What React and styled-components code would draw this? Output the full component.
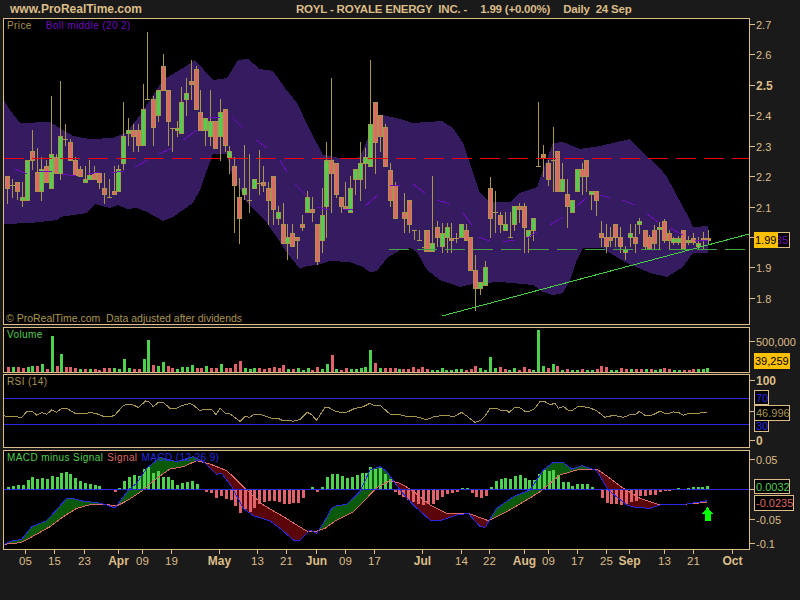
import React from 'react'
import styled, { createGlobalStyle } from 'styled-components'

const TAN = '#dcbd88'
const OLIVE = '#a8964f'
const GREEN = '#50cf50'
const RED = '#dd6a64'
const BLUE = '#2a2ae0'
const PURPLE = '#6f0cbc'

// candles: x, high, low, body top, body bottom, colour (d = doji, top is the tick)
const candles = [
  [7,176,204,176,189,'r'],[12,179,198,185,185,'d'],[17,182,200,182,192,'r'],[22,182,207,197,201,'g'],[27,160,201,160,201,'g'],
  [32,130,170,151,161,'r'],[37,148,192,172,192,'r'],[41,157,201,169,192,'g'],[46,160,183,166,183,'r'],[51,96,189,154,189,'g'],
  [56,154,174,157,174,'r'],[60,81,180,136,174,'g'],[65,124,146,139,139,'d'],[70,139,161,142,161,'r'],[75,157,176,160,176,'r'],
  [80,166,177,169,177,'r'],[85,166,183,179,183,'g'],[89,160,180,175,180,'g'],[94,166,180,173,180,'r'],[99,173,189,173,183,'r'],
  [104,173,204,188,195,'r'],[109,179,197,197,197,'d'],[114,166,195,191,195,'r'],[118,165,192,169,192,'g'],[123,102,170,136,164,'g'],
  [128,118,146,130,134,'g'],[133,124,152,130,137,'r'],[138,124,152,130,146,'r'],[143,84,146,109,146,'g'],[147,32,99,99,99,'d'],
  [153,96,146,99,128,'r'],[158,90,122,90,116,'g'],[163,54,91,66,91,'r'],[168,90,146,90,122,'r'],[172,128,152,128,128,'d'],
  [177,121,137,128,131,'g'],[181,87,134,102,134,'g'],[186,78,116,93,100,'g'],[191,60,100,81,85,'r'],[196,66,110,69,110,'r'],
  [200,90,131,112,131,'r'],[205,118,146,118,131,'g'],[210,90,146,121,137,'g'],[215,121,149,121,149,'r'],[220,99,161,112,137,'g'],
  [225,109,152,109,146,'r'],[229,146,174,151,158,'g'],[234,157,233,166,186,'r'],[239,178,244,197,219,'r'],[244,145,200,188,195,'g'],
  [249,154,213,200,200,'d'],[254,179,189,179,189,'g'],[259,150,195,183,183,'d'],[263,166,192,182,186,'r'],[268,182,225,188,201,'r'],
  [273,176,225,176,210,'r'],[278,206,225,212,219,'g'],[283,203,244,224,244,'r'],[287,224,260,237,244,'g'],[292,224,247,233,247,'r'],
  [297,237,259,237,241,'r'],[302,215,231,224,228,'r'],[307,191,213,197,213,'g'],[312,197,222,209,213,'r'],[317,224,265,224,262,'r'],
  [322,188,253,215,241,'g'],[326,142,238,160,207,'g'],[331,78,213,160,174,'r'],[336,163,198,163,195,'r'],[341,197,213,197,207,'r'],
  [345,182,209,206,209,'r'],[350,176,213,188,213,'g'],[355,169,195,169,180,'g'],[360,142,201,163,180,'g'],[365,148,189,157,164,'g'],
  [370,60,167,124,167,'g'],[375,102,174,102,143,'r'],[380,115,152,115,137,'r'],[385,124,167,127,167,'r'],[390,163,207,170,201,'r'],
  [395,182,219,185,219,'r'],[404,193,233,212,219,'r'],[409,200,233,200,225,'r'],[414,230,240,230,230,'d'],[419,230,240,240,240,'d'],
  [424,230,252,247,247,'d'],[427,230,252,230,252,'r'],[432,176,252,243,252,'g'],[437,221,247,227,238,'r'],[442,223,253,233,247,'g'],
  [447,223,253,227,238,'g'],[451,223,253,238,241,'r'],[456,233,243,238,238,'d'],[461,224,238,224,238,'g'],[466,224,241,230,241,'r'],
  [470,237,271,237,271,'r'],[475,255,311,270,289,'r'],[480,282,295,282,289,'g'],[485,261,286,267,286,'g'],[490,177,238,188,219,'r'],
  [495,191,233,212,212,'d'],[500,212,233,215,225,'r'],[505,212,231,224,231,'g'],[510,212,237,237,237,'d'],[514,206,231,206,225,'g'],
  [519,203,223,206,210,'r'],[524,203,253,206,228,'r'],[528,230,253,230,237,'g'],[533,218,241,218,231,'g'],[538,102,166,166,166,'d'],
  [543,145,177,154,158,'r'],[548,160,186,163,180,'r'],[553,127,192,160,160,'d'],[557,151,192,151,192,'r'],[562,163,192,179,192,'g'],
  [567,179,228,194,207,'r'],[572,200,213,200,213,'g'],[577,169,192,169,192,'g'],[582,163,195,169,177,'r'],[586,160,192,160,177,'r'],
  [591,191,210,191,195,'g'],[596,191,216,191,201,'r'],[601,221,247,233,238,'r'],[606,224,253,237,247,'r'],[610,227,247,237,241,'r'],
  [615,224,247,224,238,'r'],[620,227,253,237,247,'r'],[625,246,260,249,253,'g'],[630,224,247,233,238,'g'],[635,224,253,237,244,'r'],
  [639,218,234,221,225,'g'],[645,230,250,230,247,'r'],[649,235,250,237,249,'r'],[654,225,250,230,244,'r'],[659,222,250,227,230,'g'],
  [664,219,243,221,241,'r'],[669,230,250,233,241,'r'],[673,237,245,238,243,'g'],[678,236,245,238,243,'g'],[683,230,250,230,249,'r'],
  [688,236,245,240,243,'g'],[693,233,245,238,243,'r'],[698,237,249,243,247,'g'],[703,232,250,238,241,'r'],[708,230,245,238,241,'r'],
]

const bandTop = [[4,100],[10,110],[20,123],[50,122],[60,128],[73,136],[90,139],[113,138],[127,132],[140,115],[150,100],[163,80],[183,68],[195,60],[213,80],[227,78],[238,60],[248,59],[260,69],[273,71],[285,88],[297,103],[310,130],[323,155],[333,157],[347,159],[360,157],[370,133],[383,115],[400,119],[413,123],[442,121],[453,128],[463,143],[470,163],[472,170],[480,193],[490,202],[510,202],[520,193],[537,187],[543,170],[553,143],[563,142],[580,149],[600,146],[630,139],[640,150],[660,168],[667,177],[690,220],[693,227],[708,226]]
const bandBottom = [[4,224],[30,223],[57,220],[60,217],[87,213],[95,204],[110,208],[118,205],[127,209],[137,208],[147,212],[163,221],[173,217],[193,203],[200,190],[207,170],[213,154],[227,154],[230,170],[247,203],[267,223],[280,242],[287,253],[300,269],[307,266],[317,265],[330,261],[350,262],[363,267],[370,272],[377,271],[387,258],[400,250],[410,248],[417,252],[427,270],[440,280],[460,287],[473,284],[483,283],[500,282],[533,285],[543,292],[553,295],[563,293],[570,280],[577,260],[583,248],[603,248],[613,255],[627,263],[650,273],[667,277],[683,267],[693,253],[708,253]]
const bandPoints = [...bandTop, ...[...bandBottom].reverse()].join(' ')

const middleDashes = [
  [[15,169],[27,174]],[[39,171],[52,171]],[[62,174],[76,176]],[[88,174],[100,172]],[[111,173],[124,171]],
  [[135,167],[148,160]],[[159,154],[172,148]],[[183,140],[197,130]],[[208,118],[220,117]],[[232,117],[243,128]],
  [[256,140],[267,148]],[[280,160],[287,172]],[[295,184],[307,196]],[[317,207],[329,210]],[[343,209],[353,210]],
  [[365,206],[378,195]],[[390,186],[400,185]],[[413,184],[425,193]],[[437,200],[450,204]],[[462,212],[472,225]],
  [[478,237],[490,241]],[[502,242],[515,240]],[[527,238],[537,232]],[[550,225],[563,217]],[[575,208],[587,197]],
  [[600,195],[610,198]],[[622,200],[635,205]],[[647,214],[658,222]],[[670,228],[683,235]],[[695,240],[708,241]],
]

// measured on a 3x grid, so x and y are thirds of a pixel from the origin given
const grid = (x0, y0, list) => list.map(([x, y]) => [x0 + x / 3, y0 + y / 3])
const line = pts => pts.map(p => p.join(',')).join(' ')

const volume = [
  [[23,'r',141],[38,'g',141],[53,'r',141],[68,'r',144],[83,'g',141],[97,'g',138],[110,'r',138],[125,'g',132],[140,'r',147],[155,'g',48],[170,'r',138],[182,'g',102],[197,'r',141],[211,'r',141],[226,'r',144],[241,'g',147],[256,'r',147],[269,'g',147],[284,'r',147],[298,'r',150],[313,'r',144],[328,'r',144],[343,'g',144],[356,'g',147],[371,'g',117],[386,'g',144],[401,'r',147],[416,'r',147],[431,'g',117],[443,'g',60],[458,'r',135],[473,'g',138],[488,'g',126],[503,'r',138],[515,'r',144],[530,'g',147],[545,'g',141],[560,'g',141],[575,'g',135],[590,'r',144],[602,'r',144],[617,'g',138],[632,'r',144],[647,'r',144],[662,'g',132],[677,'r',144],[689,'r',144],[704,'r',132],[719,'r',123],[734,'g',144],[749,'g',147],[761,'g',144],[776,'r',144],[791,'r',147],[806,'r',144],[821,'r',141],[836,'r',144],[848,'r',135],[863,'g',147],[878,'r',147],[893,'g',144],[908,'g',150],[923,'g',144],[935,'r',150],[950,'r',141],[965,'g',147],[980,'g',132],[995,'r',105],[1007,'g',147],[1022,'r',150],[1037,'r',144],[1052,'g',147],[1067,'g',147],[1082,'g',144],[1094,'g',141],[1109,'g',90],[1124,'r',129],[1139,'g',144],[1154,'r',144],[1169,'r',144],[1184,'r',144],[1196,'g',147]],
  [[10,'r',147],[25,'r',147],[40,'r',141],[55,'r',147],[67,'r',141],[82,'r',147],[97,'g',150],[112,'g',150],[127,'g',144],[139,'g',150],[154,'g',150],[169,'g',147],[184,'g',147],[199,'r',150],[214,'r',147],[226,'r',138],[241,'g',144],[256,'g',150],[271,'g',111],[286,'g',144],[301,'r',141],[316,'r',147],[328,'g',150],[343,'g',144],[358,'r',150],[373,'r',141],[388,'r',147],[400,'g',150],[415,'g',30],[430,'g',138],[445,'r',144],[460,'g',132],[472,'r',138],[487,'g',150],[502,'r',147],[517,'g',150],[532,'g',150],[547,'r',147],[562,'g',150],[577,'g',150],[592,'r',147],[604,'r',138],[619,'r',141],[634,'g',150],[649,'g',150],[664,'r',144],[679,'r',147],[694,'g',147],[709,'r',147],[724,'r',147],[739,'g',147],[754,'r',147],[766,'g',150],[781,'g',147],[793,'r',144],[808,'r',147],[823,'g',150],[838,'g',150],[853,'r',150],[868,'r',150],[880,'r',147],[895,'g',147],[910,'g',147],[922,'g',144]],
]
const volumeBars = [
  ...volume[0].map(([x, c, y]) => ({ x: Math.round(x / 3), c, y: Math.round(320 + y / 3) })),
  ...volume[1].map(([x, c, y]) => ({ x: Math.round(400 + x / 3), c, y: Math.round(320 + y / 3) })),
]

const rsi = [
  ...grid(0, 320, [[12,287],[20,289],[45,289],[65,293],[80,275],[95,273],[110,285],[125,278],[140,283],[155,270],[170,277],[185,265],[200,265],[225,280],[260,280],[270,277],[290,281],[310,289],[335,289],[345,285],[370,256],[385,253],[400,255],[415,262],[437,243],[445,244],[460,260],[475,247],[490,247],[510,265],[530,265],[545,257],[570,250],[580,255],[600,272],[615,267],[635,268],[648,284],[660,265],[677,280],[690,282],[720,304],[735,289],[748,292],[762,283],[780,283],[800,290],[815,295],[835,295],[850,303],[865,301],[880,304],[900,298],[922,277],[935,284],[950,301],[975,262],[985,262],[1005,273],[1020,277],[1040,277],[1065,265],[1085,262],[1110,250],[1120,256],[1140,256],[1170,282],[1185,285]]),
  ...grid(400, 320, [[0,284],[20,289],[45,289],[80,299],[100,291],[130,286],[150,288],[165,288],[185,277],[200,288],[225,307],[240,302],[255,288],[270,265],[290,265],[300,270],[320,271],[327,277],[345,262],[358,262],[375,274],[390,273],[405,265],[420,245],[432,243],[450,254],[465,250],[475,265],[490,259],[505,271],[517,271],[535,259],[565,262],[590,272],[615,292],[640,286],[670,292],[690,284],[705,285],[718,274],[735,286],[755,286],[780,274],[800,282],[820,276],[835,277],[850,286],[865,281],[895,281],[905,277],[922,277]]),
]

const signal = [
  ...grid(0, 445, [[12,298],[60,293],[75,287],[150,245],[190,215],[230,190],[275,178],[315,178],[350,183],[385,165],[430,135],[470,100],[510,72],[550,65],[590,47],[630,57],[680,77],[705,100],[740,135],[790,180],[850,215],[890,240],[920,258],[945,260],[975,250],[1010,225],[1060,200],[1090,170],[1130,128],[1170,107]]),
  ...grid(400, 445, [[0,115],[35,135],[90,180],[140,205],[205,205],[265,227],[320,200],[380,165],[420,140],[480,90],[540,72],[590,72],[630,100],[670,130],[720,160],[770,177],[860,177],[922,172]]),
]
const macd = [
  ...grid(0, 445, [[12,298],[35,288],[65,283],[95,245],[140,227],[160,205],[200,160],[225,162],[255,170],[290,172],[320,180],[345,189],[385,135],[410,115],[440,70],[480,37],[530,50],[580,35],[610,50],[650,88],[665,85],[695,125],[730,190],[760,212],[810,228],[840,250],[880,285],[900,285],[930,255],[950,265],[970,235],[995,190],[1010,182],[1040,178],[1080,140],[1110,75],[1140,65],[1160,80]]),
  ...grid(400, 445, [[0,135],[40,180],[90,225],[120,227],[170,210],[205,205],[240,245],[255,247],[290,190],[340,155],[390,135],[430,75],[460,52],[490,53],[515,72],[545,62],[590,77],[625,135],[680,180],[705,187],[750,190],[780,180],[860,177],[900,171],[922,167]]),
]

const histogram = [
  ...[[23,127],[38,123],[53,120],[68,120],[83,105],[97,96],[110,102],[125,100],[140,102],[155,93],[170,96],[182,84],[197,81],[211,87],[226,99],[241,108],[256,114],[269,117],[284,120],[298,122],[329,136],[344,141],[356,129],[371,108],[386,96],[401,90],[416,93],[431,72],[443,66],[458,84],[473,78],[488,96],[503,96],[515,105],[530,120],[545,114],[560,111],[575,108],[590,117],[617,141],[632,144],[647,159],[662,153],[677,162],[692,165],[704,183],[719,204],[734,192],[749,201],[761,189],[776,177],[791,171],[806,168],[821,168],[836,171],[851,177],[866,177],[878,174],[893,174],[908,159],[923,136],[935,126],[950,141],[965,126],[980,96],[995,87],[1010,87],[1025,93],[1040,99],[1055,96],[1070,90],[1085,84],[1097,84],[1109,66],[1124,72],[1139,69],[1154,87],[1169,102],[1184,141],[1196,150]].map(([x, y]) => [x / 3, y]),
  ...[[10,155],[25,165],[40,170],[55,177],[70,180],[85,177],[100,176],[112,165],[127,156],[142,147],[157,144],[172,141],[185,129],[200,129],[215,144],[228,156],[243,159],[258,153],[273,126],[288,108],[303,102],[315,99],[330,102],[345,93],[360,90],[375,99],[388,105],[403,105],[418,87],[433,75],[448,78],[460,75],[475,90],[490,111],[505,111],[517,123],[532,117],[547,117],[560,117],[575,126],[590,136],[605,159],[620,174],[632,177],[647,177],[662,180],[677,177],[692,170],[707,168],[719,153],[734,153],[749,150],[764,150],[779,141],[794,138],[806,137],[835,129],[850,131],[865,129],[880,127],[895,127],[907,125],[922,123]].map(([x, y]) => [400 + x / 3, y]),
].map(([x, y]) => ({ x: Math.round(x), y: Math.round(445 + y / 3) }))

const at = (pts, x) => {
  for (let i = 1; i < pts.length; i++) {
    if (x <= pts[i][0]) {
      const [x0, y0] = pts[i - 1]
      const [x1, y1] = pts[i]
      return y0 + ((y1 - y0) * (x - x0)) / (x1 - x0)
    }
  }
  return pts[pts.length - 1][1]
}

let macdAbove = ''
let macdBelow = ''
for (let x = 5; x < 707; x++) {
  const m = Math.round(at(macd, x))
  const s = Math.round(at(signal, x))
  if (m < s) macdAbove += `M${x + 0.5} ${m}V${s}`
  if (m > s) macdBelow += `M${x + 0.5} ${s}V${m}`
}

const Global = createGlobalStyle`
  html, body {
    margin: 0;
    width: 800px;
    height: 600px;
    overflow: hidden;
    background: #1a1a1a;
  }
  body {
    font-family: "Liberation Sans", Arial, sans-serif;
  }
`

const Page = styled.div`
  width: 800px;
  height: 600px;
  padding-left: 3px;
  box-sizing: border-box;
  color: ${TAN};
`

const Header = styled.header`
  height: 18px;
  display: flex;
  align-items: center;
  gap: 13px;
  font-size: 11.5px;
  font-weight: bold;
  letter-spacing: -0.2px;
  white-space: pre;
  padding-left: 7px;
`

const Site = styled.span`
  width: 273px;
  font-size: 12px;
  letter-spacing: 0;
`

const Row = styled.section`
  display: flex;
  height: ${p => p.$height}px;
  margin-top: ${p => p.$gap || 0}px;
`

const Frame = styled.div`
  position: relative;
  width: 747px;
  height: 100%;
  flex: none;
  box-sizing: border-box;
  border: 1px solid ${TAN};
  background: #000;
`

const Chart = styled.svg`
  display: block;
  width: 745px;
  height: 100%;
`

const Legend = styled.div`
  position: absolute;
  left: 3px;
  top: 0;
  font-size: 10px;
  line-height: 13px;
  letter-spacing: 0.4px;
  white-space: pre;
  color: ${OLIVE};
`

const Notice = styled(Legend)`
  left: 2px;
  top: auto;
  bottom: -1px;
  font-size: 10.5px;
  letter-spacing: 0;
`

const Series = styled.span`
  margin-left: ${p => p.$indent || 0}px;
  color: ${p => p.$color};
`

const ScaleBox = styled.div`
  position: relative;
  flex: 1;
`

const ScaleSvg = styled.svg`
  display: block;
  width: 100%;
  height: 100%;
  overflow: visible;
`

const ScaleText = styled.text`
  font-size: ${p => (p.$bold ? 12 : 11)}px;
  font-weight: ${p => (p.$bold ? 'bold' : 'normal')};
  fill: ${TAN};
  dominant-baseline: central;
`

const Badge = styled.div`
  position: absolute;
  left: 4px;
  top: ${p => p.$y}px;
  width: ${p => p.$width}px;
  height: ${p => p.$height}px;
  box-sizing: border-box;
  padding: 0 1px;
  display: flex;
  align-items: center;
  justify-content: ${p => (p.$end ? 'flex-end' : 'flex-start')};
  font-size: 11px;
  color: ${p => p.$color};
  background: ${p => p.$bg || '#000'};
  border: ${p => (p.$bg ? 'none' : `1px solid ${TAN}`)};
`

const DateAxis = styled.svg`
  display: block;
  width: 747px;
  height: 24px;
  overflow: visible;
`

const DateText = styled.text`
  font-size: ${p => (p.$bold ? 12 : 11.5)}px;
  font-weight: ${p => (p.$bold ? 'bold' : 'normal')};
  fill: ${TAN};
  text-anchor: middle;
  dominant-baseline: central;
`

const dates = [
  ['05', 25], ['15', 54], ['23', 84], ['Apr', 118, true], ['09', 142], ['19', 171], ['May', 219, true], ['13', 257],
  ['21', 286], ['Jun', 316, true], ['09', 345], ['17', 374], ['Jul', 422, true], ['14', 461], ['22', 489],
  ['Aug', 524, true], ['09', 548], ['17', 577], ['25', 606], ['Sep', 629, true], ['13', 664], ['21', 693], ['Oct', 732, true],
]

const priceTicks = [
  ['2.7', 24], ['2.6', 54], ['2.5', 85, true], ['2.4', 115], ['2.3', 146], ['2.2', 176], ['2.1', 207], ['', 237], ['1.9', 267], ['1.8', 298],
]
const volumeTicks = [['500,000', 341]]
const rsiTicks = [['100', 380, true], ['', 411], ['0', 440, true]]
const macdTicks = [['0.05', 459], ['', 489], ['-0.05', 519], ['-0.1', 543]]

function Scale({ top, height, ticks, children }) {
  return (
    <ScaleBox>
      <ScaleSvg viewBox={`750 ${top} 50 ${height}`} shapeRendering="crispEdges">
        {ticks.map(([label, y, bold]) => (
          <g key={y}>
            <line x1={750} x2={755} y1={y + 0.5} y2={y + 0.5} stroke={TAN} />
            {label && <ScaleText x={756} y={y + 0.5} $bold={bold}>{label}</ScaleText>}
          </g>
        ))}
      </ScaleSvg>
      {children}
    </ScaleBox>
  )
}

function Candles() {
  return candles.map(([x, high, low, top, bottom, c]) => (
    <g key={x}>
      <line x1={x + 0.5} x2={x + 0.5} y1={high} y2={low} stroke={OLIVE} />
      {c === 'd' ? (
        <line x1={x - 2} x2={x + 3} y1={top + 0.5} y2={top + 0.5} stroke={OLIVE} />
      ) : (
        <rect x={x - 1.5} y={top + 0.5} width={4} height={Math.max(bottom - top - 1, 1)} fill={c === 'g' ? GREEN : RED} stroke={OLIVE} />
      )}
    </g>
  ))
}

function PricePanel() {
  return (
    <Row $height={307}>
      <Frame>
        <Chart viewBox="4 19 745 305" shapeRendering="crispEdges">
          <polygon points={bandPoints} fill="#351b60" />
          <Candles />
          {middleDashes.map((d, i) => (
            <polyline key={i} points={line(d)} fill="none" stroke={PURPLE} />
          ))}
          <line x1={4} x2={749} y1={158.5} y2={158.5} stroke="#f00000" strokeDasharray="20 8" />
          <line x1={389} x2={745} y1={249.5} y2={249.5} stroke="#46a046" strokeDasharray="20 8" />
          <line x1={442} y1={316} x2={749} y2={234} stroke="#46d046" />
        </Chart>
        <Legend>Price<Series $indent={14} $color={PURPLE}>Boll middle (20 2)</Series></Legend>
        <Notice>© ProRealTime.com  Data adjusted after dividends</Notice>
      </Frame>
      <Scale top={18} height={307} ticks={priceTicks}>
        <Badge $y={214} $width={36} $height={16} $color={PURPLE} $end>1.985</Badge>
        <Badge $y={214} $width={24} $height={16} $color="#000" $bg="#ffc000">1.99</Badge>
      </Scale>
    </Row>
  )
}

function VolumePanel() {
  return (
    <Row $height={46} $gap={2}>
      <Frame>
        <Chart viewBox="4 328 745 44" shapeRendering="crispEdges">
          {volumeBars.map(b => (
            <rect key={b.x} x={b.x - 1} y={b.y} width={3} height={372 - b.y} fill={b.c === 'g' ? '#4ed24e' : '#e0626a'} />
          ))}
        </Chart>
        <Legend><Series $color={GREEN}>Volume</Series></Legend>
      </Frame>
      <Scale top={327} height={46} ticks={volumeTicks}>
        <Badge $y={26} $width={36} $height={16} $color="#000" $bg="#ffc000">39,259</Badge>
      </Scale>
    </Row>
  )
}

function RsiPanel() {
  return (
    <Row $height={74} $gap={1}>
      <Frame>
        <Chart viewBox="4 375 745 72" shapeRendering="crispEdges">
          <line x1={4} x2={749} y1={398.5} y2={398.5} stroke={BLUE} />
          <line x1={4} x2={749} y1={424.5} y2={424.5} stroke={BLUE} />
          <polyline points={line(rsi)} fill="none" stroke={OLIVE} />
        </Chart>
        <Legend>RSI (14)</Legend>
      </Frame>
      <Scale top={374} height={74} ticks={rsiTicks}>
        <Badge $y={16} $width={15} $height={15} $color={BLUE}>70</Badge>
        <Badge $y={45} $width={15} $height={13} $color={BLUE}>30</Badge>
        <Badge $y={31} $width={36} $height={16} $color={OLIVE}>46.996</Badge>
      </Scale>
    </Row>
  )
}

function MacdPanel() {
  return (
    <Row $height={100} $gap={2}>
      <Frame>
        <Chart viewBox="4 451 745 98" shapeRendering="crispEdges">
          <path d={macdAbove} stroke="#0a5a0a" fill="none" />
          <path d={macdBelow} stroke="#5a0508" fill="none" />
          {histogram.map(b => (
            <rect
              key={b.x}
              x={b.x - 1}
              y={Math.min(b.y, 489)}
              width={3}
              height={Math.abs(b.y - 489)}
              fill={b.y < 489 ? '#4ed24e' : '#e0626a'}
            />
          ))}
          <polyline points={line(signal)} fill="none" stroke={RED} />
          <polyline points={line(macd)} fill="none" stroke={BLUE} />
          <line x1={4} x2={749} y1={489.5} y2={489.5} stroke={BLUE} />
          <polygon points="707.5,507 713,514 710.5,514 710.5,521 705,521 705,514 702,514" fill="#00ff00" />
        </Chart>
        <Legend>
          <Series $color={GREEN}>MACD minus Signal</Series>
          <Series $indent={4} $color={RED}>Signal</Series>
          <Series $indent={4} $color={BLUE}>MACD (12 26 9)</Series>
        </Legend>
      </Frame>
      <Scale top={450} height={100} ticks={macdTicks}>
        <Badge $y={29} $width={36} $height={15} $color={GREEN}>0.0032</Badge>
        <Badge $y={45} $width={40} $height={16} $color={RED}>-0.0235</Badge>
      </Scale>
    </Row>
  )
}

export default function App() {
  return (
    <Page>
      <Global />
      <Header>
        <Site>www.ProRealTime.com</Site>
        <span>ROYL - ROYALE ENERGY  INC. -</span>
        <span>1.99 (+0.00%)</span>
        <span>Daily  24 Sep</span>
      </Header>
      <PricePanel />
      <VolumePanel />
      <RsiPanel />
      <MacdPanel />
      <DateAxis viewBox="3 550 747 24" shapeRendering="crispEdges">
        {dates.map(([label, x, bold]) => (
          <g key={`${label}${x}`}>
            <line x1={x + 0.5} x2={x + 0.5} y1={550} y2={554} stroke={TAN} />
            <DateText x={x + 0.5} y={561} $bold={bold}>{label}</DateText>
          </g>
        ))}
      </DateAxis>
    </Page>
  )
}
